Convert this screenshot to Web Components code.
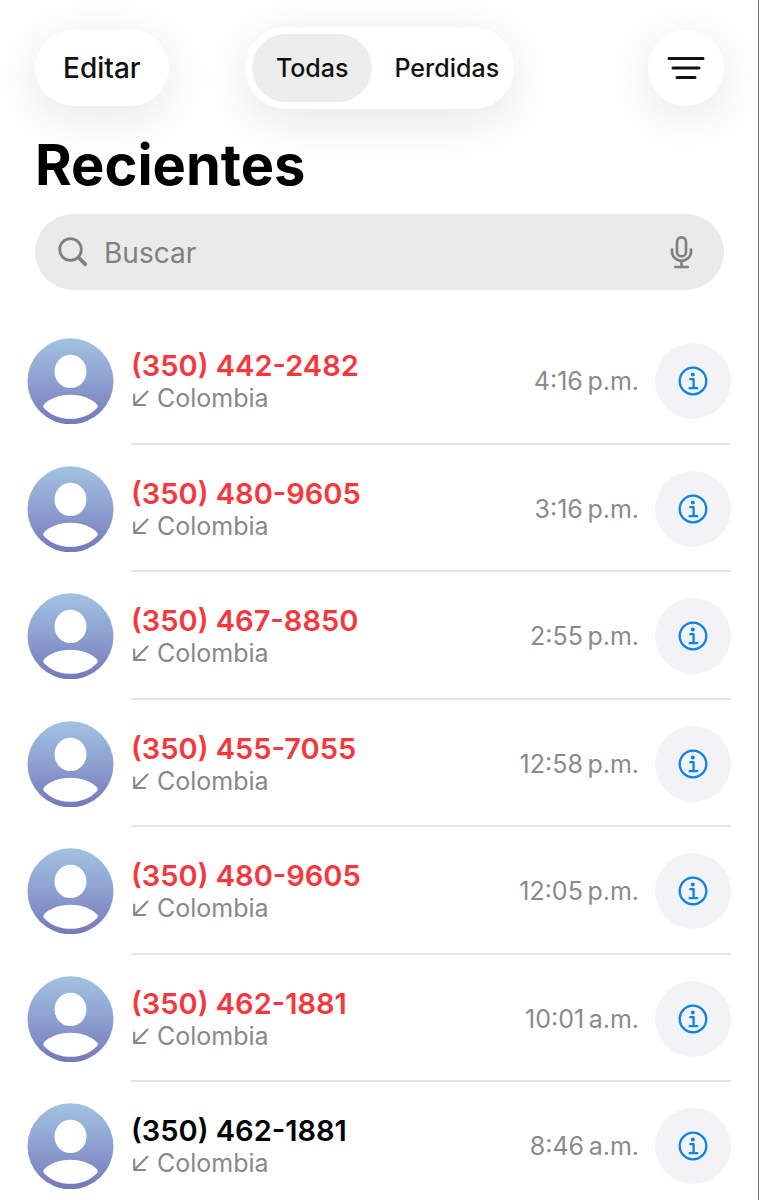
<!DOCTYPE html>
<html lang="es">
<head>
    <meta charset="utf-8">
    <meta name="viewport" content="width=device-width, initial-scale=1">
    <title>Recientes</title>
    <style>
        body {
            margin: 0;
            background: #fff;
            color: #000;
            font-family: Inter, "Liberation Sans", sans-serif;
        }
    </style>
</head>
<body>
    <recent-calls>
        <call-bar slot="bar"></call-bar>
        <search-field slot="search" data-placeholder="Buscar"></search-field>
        <call-item data-number="(350) 442-2482" data-place="Colombia" data-time="4:16&#8239;p.m." missed></call-item>
        <call-item data-number="(350) 480-9605" data-place="Colombia" data-time="3:16&#8239;p.m." missed></call-item>
        <call-item data-number="(350) 467-8850" data-place="Colombia" data-time="2:55&#8239;p.m." missed></call-item>
        <call-item data-number="(350) 455-7055" data-place="Colombia" data-time="12:58&#8239;p.m." missed></call-item>
        <call-item data-number="(350) 480-9605" data-place="Colombia" data-time="12:05&#8239;p.m." missed></call-item>
        <call-item data-number="(350) 462-1881" data-place="Colombia" data-time="10:01&#8239;a.m." missed></call-item>
        <call-item data-number="(350) 462-1881" data-place="Colombia" data-time="8:46&#8239;a.m."></call-item>
    </recent-calls>

    <script>
        class RecentCalls extends HTMLElement {

            constructor() {
                super();

                const template = document.createElement('template');

                template.innerHTML = `<style>
                                            :host {
                                                display: block;
                                                box-sizing: border-box;
                                                height: 100vh;
                                                overflow: hidden;
                                                padding-top: 27px;
                                                box-shadow: inset -1px 0 #77787a;
                                            }

                                            header {
                                                padding: 0 35px;
                                            }

                                            h1 {
                                                margin: 24px 0 17px;
                                                font-size: 56px;
                                                line-height: 64px;
                                                font-weight: 700;
                                            }

                                            .list {
                                                display: grid;
                                                grid-auto-rows: 128px 127px;
                                                margin-top: 27px;
                                                padding: 0 28px 0 27px;
                                            }
                                    </style>
                                    <header>
                                        <slot name="bar"></slot>
                                        <h1>Recientes</h1>
                                        <slot name="search"></slot>
                                    </header>
                                    <main class="list"><slot></slot></main>`;

                const shadowRoot = this.attachShadow({ mode: 'open' });
                shadowRoot.appendChild(template.content.cloneNode(true));
            }
        }

        class CallBar extends HTMLElement {

            constructor() {
                super();

                const template = document.createElement('template');

                template.innerHTML = `<style>
                                            :host {
                                                display: grid;
                                                grid-template-columns: 1fr auto 1fr;
                                                align-items: center;
                                            }

                                            button {
                                                border: 0;
                                                padding: 0;
                                                background: #fff;
                                                color: #111;
                                                font: inherit;
                                                font-weight: 500;
                                            }

                                            .edit, .filter, .tabs {
                                                box-shadow: 0 10px 52px rgba(0, 0, 0, 0.1);
                                            }

                                            .edit {
                                                justify-self: start;
                                                height: 76px;
                                                padding: 0 28px;
                                                border-radius: 38px;
                                                font-size: 28px;
                                            }

                                            .tabs {
                                                display: flex;
                                                padding: 7px;
                                                border-radius: 41px;
                                                background: #fff;
                                            }

                                            .tabs button {
                                                height: 68px;
                                                padding: 0 24px;
                                                border-radius: 34px;
                                                font-size: 25px;
                                            }

                                            .tabs button:last-child {
                                                padding: 0 8px 0 22px;
                                            }

                                            .tabs [aria-pressed="true"] {
                                                background: #ededed;
                                            }

                                            .filter {
                                                justify-self: end;
                                                display: grid;
                                                place-items: center;
                                                width: 76px;
                                                height: 76px;
                                                border-radius: 50%;
                                            }
                                    </style>
                                    <button class="edit">Editar</button>
                                    <div class="tabs">
                                        <button aria-pressed="true">Todas</button>
                                        <button aria-pressed="false">Perdidas</button>
                                    </div>
                                    <button class="filter" aria-label="Filtrar">
                                        <svg width="40" height="26" viewBox="0 0 40 26" fill="none" stroke="#111" stroke-width="3" stroke-linecap="round">
                                            <path d="M3 3.5H37M7 13H33M11 22.5H29"/>
                                        </svg>
                                    </button>`;

                const shadowRoot = this.attachShadow({ mode: 'open' });
                shadowRoot.appendChild(template.content.cloneNode(true));
            }
        }

        class SearchField extends HTMLElement {

            static get observedAttributes() { return ['data-placeholder']; }

            constructor() {
                super();

                const template = document.createElement('template');

                template.innerHTML = `<style>
                                            :host {
                                                display: block;
                                                position: relative;
                                            }

                                            label {
                                                display: flex;
                                                align-items: center;
                                                gap: 15px;
                                                height: 76px;
                                                box-sizing: border-box;
                                                padding: 0 28px 0 22px;
                                                border-radius: 38px;
                                                background: #eaeaea;
                                                color: #808083;
                                            }

                                            input {
                                                flex: 1;
                                                min-width: 0;
                                                border: 0;
                                                padding: 2px 0 0;
                                                outline: 0;
                                                background: none;
                                                color: #000;
                                                font: inherit;
                                                font-size: 28px;
                                                line-height: 36px;
                                            }

                                            input::placeholder {
                                                color: #808083;
                                                opacity: 1;
                                            }

                                            button {
                                                display: flex;
                                                border: 0;
                                                padding: 0;
                                                background: none;
                                                color: inherit;
                                            }
                                    </style>
                                    <label>
                                        <svg width="32" height="32" viewBox="0 0 32 32" fill="none" stroke="currentColor" stroke-linecap="round">
                                            <circle cx="13.5" cy="13.5" r="10.8" stroke-width="2.8"/>
                                            <path d="M21.5 21.5L28.2 28.2" stroke-width="3.8"/>
                                        </svg>
                                        <input type="search">
                                        <button aria-label="Dictar">
                                            <svg width="28" height="34" viewBox="0 0 28 34" fill="none" stroke="currentColor" stroke-width="2.7" stroke-linecap="round">
                                                <rect x="9" y="2.4" width="9" height="19" rx="4.5"/>
                                                <path d="M4 14.5V16.5A9.5 9.3 0 0 0 23 16.5V14.5M13.5 26V32M7.3 32H19.7"/>
                                            </svg>
                                        </button>
                                    </label>`;

                const shadowRoot = this.attachShadow({ mode: 'open' });
                shadowRoot.appendChild(template.content.cloneNode(true));
            }

            attributeChangedCallback(name, oldValue, newValue) {
                const input = this.shadowRoot.querySelector('input');
                input.placeholder = newValue;
                input.setAttribute('aria-label', newValue);
            }
        }

        class CallItem extends HTMLElement {

            static get observedAttributes() { return ['data-number', 'data-place', 'data-time']; }

            constructor() {
                super();

                const template = document.createElement('template');

                template.innerHTML = `<style>
                                            :host {
                                                display: flex;
                                                align-items: center;
                                                gap: 17px;
                                            }

                                            .avatar {
                                                flex: none;
                                            }

                                            .row {
                                                flex: 1;
                                                align-self: stretch;
                                                display: flex;
                                                align-items: center;
                                                gap: 16px;
                                                box-shadow: inset 0 -2px #e6e6e7;
                                            }

                                            .info {
                                                flex: 1;
                                            }

                                            .number {
                                                font-size: 29px;
                                                line-height: 34px;
                                                font-weight: 600;
                                            }

                                            :host([missed]) .number {
                                                color: #f4383e;
                                            }

                                            .place {
                                                display: flex;
                                                align-items: center;
                                                gap: 8px;
                                                font-size: 25px;
                                                line-height: 30px;
                                                color: #88888c;
                                            }

                                            time {
                                                font-size: 25px;
                                                line-height: 30px;
                                                color: #8a8a8e;
                                            }

                                            button {
                                                display: grid;
                                                place-items: center;
                                                width: 76px;
                                                height: 76px;
                                                border: 0;
                                                padding: 0;
                                                border-radius: 50%;
                                                background: #f3f3f6;
                                                color: #0a84e8;
                                            }
                                    </style>
                                    <svg class="avatar" width="87" height="86" viewBox="0 0 87 86">
                                        <defs>
                                            <linearGradient id="sky" x1="0" y1="0" x2="0" y2="1">
                                                <stop offset="0" stop-color="#a2c3e1"/>
                                                <stop offset="0.5" stop-color="#8e9fd0"/>
                                                <stop offset="1" stop-color="#7478b9"/>
                                            </linearGradient>
                                        </defs>
                                        <circle cx="43.5" cy="43.3" r="43" fill="url(#sky)"/>
                                        <ellipse cx="43.5" cy="33.4" rx="16" ry="16.6" fill="#fff"/>
                                        <path d="M17.2 66.3C22 61 32 56.8 43.5 56.8S65 61 69.8 66.3Q71.8 68.6 69.6 70.4C63 77 54 80.8 43.5 80.8S24 77 17.4 70.4Q15.2 68.6 17.2 66.3Z" fill="#fff"/>
                                    </svg>
                                    <div class="row">
                                        <div class="info">
                                            <div class="number"></div>
                                            <div class="place">
                                                <svg width="18" height="18" viewBox="0 0 18 18" fill="none" stroke="currentColor" stroke-width="2.1" stroke-linecap="round" stroke-linejoin="round">
                                                    <path d="M16.5 2.5L3.2 16M3.2 5.5V16H14"/>
                                                </svg>
                                                <span></span>
                                            </div>
                                        </div>
                                        <time></time>
                                        <button aria-label="Información">
                                            <svg width="30" height="30" viewBox="0 0 30 30" fill="none" stroke="currentColor" stroke-width="2.3">
                                                <circle cx="15" cy="15" r="13.3"/>
                                                <circle cx="14.8" cy="8.6" r="2" fill="currentColor" stroke="none"/>
                                                <path d="M12.3 13.2H15.6V22M11.6 22.2H19.2" stroke-linecap="round" stroke-linejoin="round"/>
                                            </svg>
                                        </button>
                                    </div>`;

                const shadowRoot = this.attachShadow({ mode: 'open' });
                shadowRoot.appendChild(template.content.cloneNode(true));
            }

            attributeChangedCallback(name, oldValue, newValue) {

                switch (name) {
                    case 'data-number':
                        this.shadowRoot.querySelector('.number').textContent = newValue;
                        break;
                    case 'data-place':
                        this.shadowRoot.querySelector('.place span').textContent = newValue;
                        break;
                    case 'data-time':
                        this.shadowRoot.querySelector('time').textContent = newValue;
                        break;
                }
            }
        }

        customElements.define('recent-calls', RecentCalls);
        customElements.define('call-bar', CallBar);
        customElements.define('search-field', SearchField);
        customElements.define('call-item', CallItem);
    </script>
</body>
</html>
